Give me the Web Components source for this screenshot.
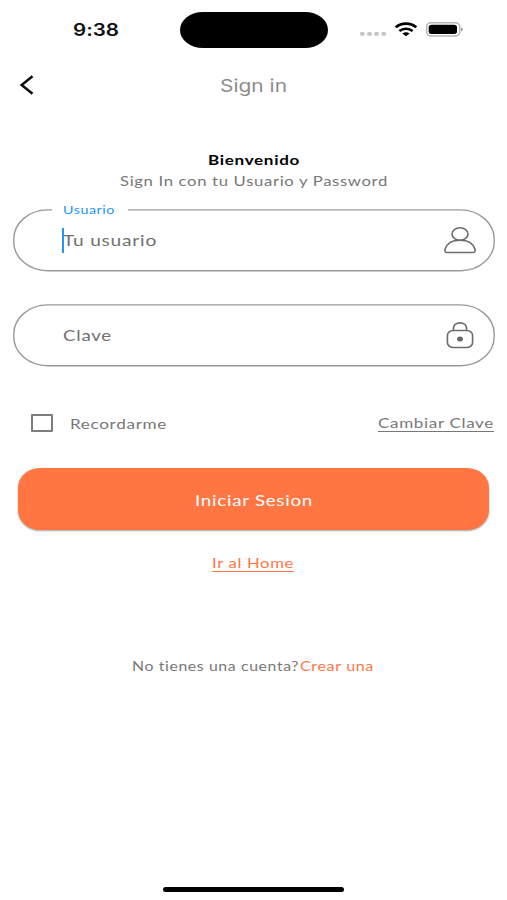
<!DOCTYPE html>
<html lang="es">
<head>
<meta charset="UTF-8">
<title>Sign in</title>
<style>
    body {
        margin: 0;
        background: #fff;
        font-family: Lato, "Open Sans", sans-serif;
    }
</style>
</head>
<body>
<sign-in-page></sign-in-page>

<script>
// One line of text, widened to the width it is given
class WideText extends HTMLElement {
    constructor() {
        super();
        this.attachShadow({mode: 'open'});
    }
    connectedCallback() {
        this.shadowRoot.innerHTML = `
        <style>
    :host {
        display: block;
        flex: none;
        white-space: nowrap;
        line-height: 20px;
        height: 20px;
        letter-spacing: .04em;
        font-variant-ligatures: none;
    }
    span {
        display: inline-block;
        transform-origin: 0 50%;
    }
    </style>
        <span><slot></slot></span>
        `;
        const width = Number(this.getAttribute('width'));
        const span = this.shadowRoot.querySelector('span');
        this.style.width = width + 'px';
        span.style.transform = `scaleX(${width / span.getBoundingClientRect().width})`;
    }
}

class StatusBar extends HTMLElement {
    constructor() {
        super();
        this.attachShadow({mode: 'open'}).innerHTML = `
        <style>
    :host {
        display: flex;
        align-items: center;
        box-sizing: border-box;
        height: 59px;
        padding-left: 73px;
    }
    wide-text {
        font-family: Inter, sans-serif;
        font-size: 17px;
        font-weight: 600;
        letter-spacing: 0;
        color: #111;
    }
    .island {
        width: 148px;
        height: 36px;
        margin-left: 61px;
        border-radius: 23px / 18px;
        background: #000;
    }
    svg {
        margin-left: 30px;
    }
    </style>
        <wide-text width="46">9:38</wide-text>
        <div class="island"></div>
        <svg width="108" height="24" viewBox="358 17.500 108 24" fill="none">
            <g fill="#c6c6c6">
                <rect x="360" y="31.5" width="4.6" height="3.8" rx="1.4"/>
                <rect x="367.2" y="31.5" width="4.6" height="3.8" rx="1.4"/>
                <rect x="374.2" y="31.5" width="4.6" height="3.8" rx="1.4"/>
                <rect x="381.4" y="31.5" width="4.6" height="3.8" rx="1.4"/>
            </g>
            <g stroke="#000" stroke-width="2.7">
                <path d="M395.7 26.8C401.5 21.9 410.5 21.9 416.3 26.8"/>
                <path d="M399.4 30.500C403.2 27.500 408.8 27.500 412.6 30.500"/>
            </g>
            <path fill="#000" d="M402.4 33C404.5 31.300 407.5 31.300 409.6 33L406 35.800Z"/>
            <rect x="426.7" y="22.2" width="33" height="13.300" rx="4.5" ry="4" stroke="#b5b5b5" stroke-width="1.5"/>
            <rect x="428.7" y="24.200" width="28.3" height="9.4" rx="3" ry="2.5" fill="#000"/>
            <path fill="#888" d="M461.2 27C463.2 27.500 463.2 30.400 461.2 30.900Z"/>
        </svg>
        `;
    }
}

class NavBar extends HTMLElement {
    constructor() {
        super();
        this.attachShadow({mode: 'open'}).innerHTML = `
        <style>
    :host {
        display: grid;
        grid-template-columns: 60px 1fr 60px;
        align-items: center;
        justify-items: center;
        height: 52px;
        font-family: Inter, sans-serif;
        font-size: 17px;
        color: #8b8b8b;
    }
    svg {
        justify-self: start;
        margin-left: 18px;
    }
    ::slotted(wide-text) {
        letter-spacing: 0;
        padding-top: 1px;
    }
    </style>
        <svg width="18" height="22" viewBox="0 0 18 22" fill="none" stroke="#111" stroke-width="2.6">
            <path d="M14.5 2.3L3.7 11L14.5 19.7"/>
        </svg>
        <slot></slot>
        `;
    }
}

class TextField extends HTMLElement {
    constructor() {
        super();
        this.attachShadow({mode: 'open'}).innerHTML = `
        <style>
    :host {
        display: flex;
        position: relative;
        align-items: center;
        justify-content: space-between;
        box-sizing: border-box;
        height: 64px;
        padding: 0 18px 0 50px;
        font-size: 16px;
        color: #707070;
    }
    .outline {
        position: absolute;
        inset: 0;
        width: 100%;
        height: 100%;
    }
    .value {
        display: flex;
        position: relative;
        align-items: center;
    }
    .cursor {
        display: none;
        position: absolute;
        left: -1px;
        width: 2px;
        height: 25px;
        background: #2196f3;
    }
    :host([focused]) .cursor {
        display: block;
    }
    ::slotted([slot="label"]) {
        position: absolute;
        top: -8px;
        left: 39px;
        padding: 0 13px 0 11px;
        background: #fff;
        font-size: 12px;
        color: #2196f3;
    }
    ::slotted(svg) {
        position: relative;
    }
    </style>
        <svg class="outline" viewBox="0 0 482 64" fill="none">
            <rect x=".8" y="1.9" width="480.4" height="60.900" rx="34" ry="29" stroke="#999" stroke-width="1.4"/>
        </svg>
        <slot name="label"></slot>
        <div class="value"><slot></slot><div class="cursor"></div></div>
        <slot name="icon"></slot>
        `;
    }
}

class CheckOption extends HTMLElement {
    constructor() {
        super();
        this.attachShadow({mode: 'open'}).innerHTML = `
        <style>
    :host {
        display: flex;
        align-items: center;
        gap: 17px;
    }
    .box {
        box-sizing: border-box;
        width: 22px;
        height: 18px;
        border: 2px solid #7d7d7d;
        border-radius: 1px;
    }
    ::slotted(wide-text) {
        padding-top: 1px;
    }
    </style>
        <div class="box"></div>
        <slot></slot>
        `;
    }
}

class MainButton extends HTMLElement {
    constructor() {
        super();
        this.attachShadow({mode: 'open'}).innerHTML = `
        <style>
    :host {
        display: flex;
        align-items: center;
        justify-content: center;
        box-sizing: border-box;
        height: 62px;
        padding-top: 2px;
        border-radius: 22px / 20px;
        background: #ff7643;
        box-shadow: 0 1px 2px rgba(0, 0, 0, .35);
        font-size: 15.5px;
        color: #fff;
    }
    </style>
        <slot></slot>
        `;
    }
}

class TextLink extends HTMLElement {
    constructor() {
        super();
        this.attachShadow({mode: 'open'}).innerHTML = `
        <style>
    :host {
        display: block;
        box-sizing: border-box;
        height: 19px;
        border-bottom: 1px solid currentColor;
    }
    </style>
        <slot></slot>
        `;
    }
}

class SignInPage extends HTMLElement {
    constructor() {
        super();
        this.attachShadow({mode: 'open'}).innerHTML = `
        <style>
    :host {
        display: flex;
        flex-direction: column;
        box-sizing: border-box;
        height: 900px;
        font-size: 14px;
        color: #777;
    }
    header {
        display: flex;
        flex-direction: column;
        align-items: center;
        margin-top: 39px;
    }
    header wide-text:first-child {
        font-weight: 700;
        color: #000;
        height: 21px;
    }
    form {
        display: flex;
        flex-direction: column;
        margin-top: 17px;
        padding: 0 12px 0 13px;
    }
    text-field + text-field {
        margin-top: 31px;
    }
    .options {
        display: flex;
        align-items: center;
        justify-content: space-between;
        margin-top: 46px;
        padding: 0 1px 0 18px;
        height: 20px;
    }
    .options text-link {
        margin-top: -2px;
    }
    main-button {
        margin: 35px 6px 0 5px;
    }
    .home {
        align-self: center;
        margin: 23px 1px 0 0;
        color: #ff7643;
    }
    .signup {
        display: flex;
        justify-content: center;
        gap: 1px;
        margin: 84px 1px 0 0;
    }
    .signup wide-text:last-child {
        color: #ff7643;
    }
    .home-bar {
        align-self: center;
        width: 181px;
        height: 5px;
        margin: auto 0 8px;
        border-radius: 3px;
        background: #000;
    }
    </style>
        <status-bar></status-bar>
        <nav-bar><wide-text width="67">Sign in</wide-text></nav-bar>
        <header>
            <wide-text width="92">Bienvenido</wide-text>
            <wide-text width="268">Sign In con tu Usuario y Password</wide-text>
        </header>
        <form>
            <text-field focused>
                <wide-text slot="label" width="52">Usuario</wide-text>
                <wide-text width="94">Tu usuario</wide-text>
                <svg slot="icon" width="34" height="30" viewBox="0 0 34 30" fill="none" stroke="#6c6c6c" stroke-width="1.6">
                    <ellipse cx="17" cy="9" rx="8" ry="6.3"/>
                    <path d="M17 15.3C8.7 15.3 3.6 19.3 2 24.2C1.5 26.200 2.4 27.5 4.2 27.5H29.8C31.6 27.5 32.5 26.200 32 24.2C30.4 19.3 25.3 15.3 17 15.3Z"/>
                </svg>
            </text-field>
            <text-field>
                <wide-text width="49">Clave</wide-text>
                <svg slot="icon" width="34" height="30" viewBox="0 0 34 30" fill="none" stroke="#6c6c6c" stroke-width="1.6">
                    <path d="M10.4 10.5V8.5C10.4 5.2 13.2 2.9 17 2.9S23.6 5.2 23.6 8.5V10.5"/>
                    <rect x="4.4" y="10.5" width="25.2" height="17" rx="6" ry="5"/>
                    <ellipse cx="17" cy="18.9" rx="3" ry="2.5" fill="#666" stroke="none"/>
                </svg>
            </text-field>
            <div class="options">
                <check-option><wide-text width="97">Recordarme</wide-text></check-option>
                <text-link><wide-text width="116">Cambiar Clave</wide-text></text-link>
            </div>
            <main-button><wide-text width="118">Iniciar Sesion</wide-text></main-button>
        </form>
        <text-link class="home"><wide-text width="82">Ir al Home</wide-text></text-link>
        <div class="signup">
            <wide-text width="167">No tienes una cuenta?</wide-text>
            <wide-text width="74">Crear una</wide-text>
        </div>
        <div class="home-bar"></div>
        `;
    }
}

customElements.define('wide-text', WideText)
customElements.define('status-bar', StatusBar)
customElements.define('nav-bar', NavBar)
customElements.define('text-field', TextField)
customElements.define('check-option', CheckOption)
customElements.define('main-button', MainButton)
customElements.define('text-link', TextLink)
customElements.define('sign-in-page', SignInPage)
</script>
</body>
</html>
